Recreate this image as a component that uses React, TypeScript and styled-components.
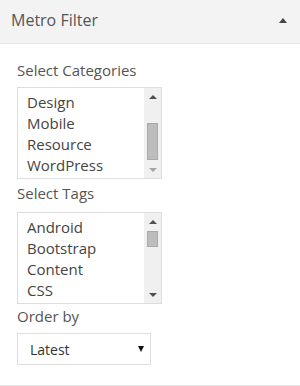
import * as React from 'react'
import styled, { createGlobalStyle } from 'styled-components'

const GlobalStyle = createGlobalStyle`
    html, body {
        margin: 0;
        padding: 0;
        background: #fff;
    }
    body {
        font-family: "Open Sans", "Liberation Sans", sans-serif;
    }
`;

export const Widget = styled.div`
    width: 300px;
    height: 386px;
    box-sizing: border-box;
    border-bottom: 1px solid #e8e8e8;
    background: #fff;
`;

export const Head = styled.div`
    height: 44px;
    box-sizing: border-box;
    display: flex;
    align-items: center;
    justify-content: space-between;
    padding: 0 10px 3px 11px;
    background: #f3f3f3;
    border-bottom: 1px solid #e6e6e6;
`;

export const Title = styled.h3`
    margin: 0;
    font-size: 16px;
    font-weight: 400;
    color: #555;
`;

export const Toggle = styled.span`
    width: 0;
    height: 0;
    margin-right: 3px;
    border-left: 4px solid transparent;
    border-right: 4px solid transparent;
    border-bottom: 5px solid #444;
`;

export const Body = styled.div`
    padding: 16px 17px 0;
`;

export const Label = styled.div<{ $gap?: number }>`
    font-size: 15px;
    line-height: 21px;
    color: #555;
    margin-bottom: ${p => p.$gap ?? 6}px;
`;

export const ListBox = styled.div<{ $after?: number }>`
    width: 145px;
    height: 92px;
    box-sizing: border-box;
    border: 1px solid #ddd;
    display: flex;
    margin-bottom: ${p => p.$after ?? 4}px;
    background: #fff;
`;

export const Items = styled.ul`
    flex: 1;
    list-style: none;
    margin: 0;
    padding: 4px 0 0 9px;
    overflow: hidden;
`;

export const Item = styled.li`
    font-size: 15px;
    line-height: 21px;
    color: #444;
    white-space: nowrap;
`;

export const Track = styled.div`
    width: 17px;
    display: flex;
    flex-direction: column;
    align-items: center;
    background: #f0f0f0;
`;

export const ArrowBtn = styled.div<{ $down?: boolean; $dim?: boolean }>`
    height: 17px;
    width: 17px;
    display: flex;
    align-items: center;
    justify-content: center;
    flex-shrink: 0;

    &::after {
        content: '';
        width: 0;
        height: 0;
        border-left: 4px solid transparent;
        border-right: 4px solid transparent;
        ${p => p.$down
            ? `border-top: 4px solid ${p.$dim ? '#a3a3a3' : '#505050'};`
            : `border-bottom: 4px solid ${p.$dim ? '#a3a3a3' : '#505050'};`}
    }
`;

export const Rail = styled.div`
    flex: 1;
    width: 100%;
    display: flex;
    flex-direction: column;
    align-items: center;
`;

export const Thumb = styled.div<{ $size: number; $offset: number }>`
    width: 11px;
    height: ${p => p.$size}px;
    margin-top: ${p => p.$offset}px;
    box-sizing: border-box;
    background: #bdbdbd;
    border: 1px solid #a9a9a9;
`;

export const Dropdown = styled.div`
    width: 134px;
    height: 32px;
    margin-top: 3px;
    box-sizing: border-box;
    border: 1px solid #ddd;
    display: flex;
    align-items: center;
    justify-content: space-between;
    padding: 0 6px 0 12px;
    font-size: 14px;
    color: #333;
    background: #fff;
`;

export const Caret = styled.span`
    width: 0;
    height: 0;
    border-left: 3.5px solid transparent;
    border-right: 3.5px solid transparent;
    border-top: 6px solid #111;
`;

type ListProps = {
    items: string[]
    thumb: number
    offset: number
    after?: number
    atTop?: boolean
    atBottom?: boolean
}

const List = ({ items, thumb, offset, after, atTop, atBottom }: ListProps) => (
    <ListBox $after={after}>
        <Items>
            {items.map(i => <Item key={i}>{i}</Item>)}
        </Items>
        <Track>
            <ArrowBtn $dim={atTop} />
            <Rail>
                <Thumb $size={thumb} $offset={offset} />
            </Rail>
            <ArrowBtn $down $dim={atBottom} />
        </Track>
    </ListBox>
);

export default function App() {
    return (
        <Widget>
            <GlobalStyle />
            <Head>
                <Title>Metro Filter</Title>
                <Toggle />
            </Head>
            <Body>
                <Label>Select Categories</Label>
                <List items={['Design', 'Mobile', 'Resource', 'WordPress']} thumb={37} offset={18} atBottom />
                <Label $gap={8}>Select Tags</Label>
                <List items={['Android', 'Bootstrap', 'Content', 'CSS']} thumb={16} offset={1} after={2} />
                <Label>Order by</Label>
                <Dropdown>
                    <span>Latest</span>
                    <Caret />
                </Dropdown>
            </Body>
        </Widget>
    )
}
